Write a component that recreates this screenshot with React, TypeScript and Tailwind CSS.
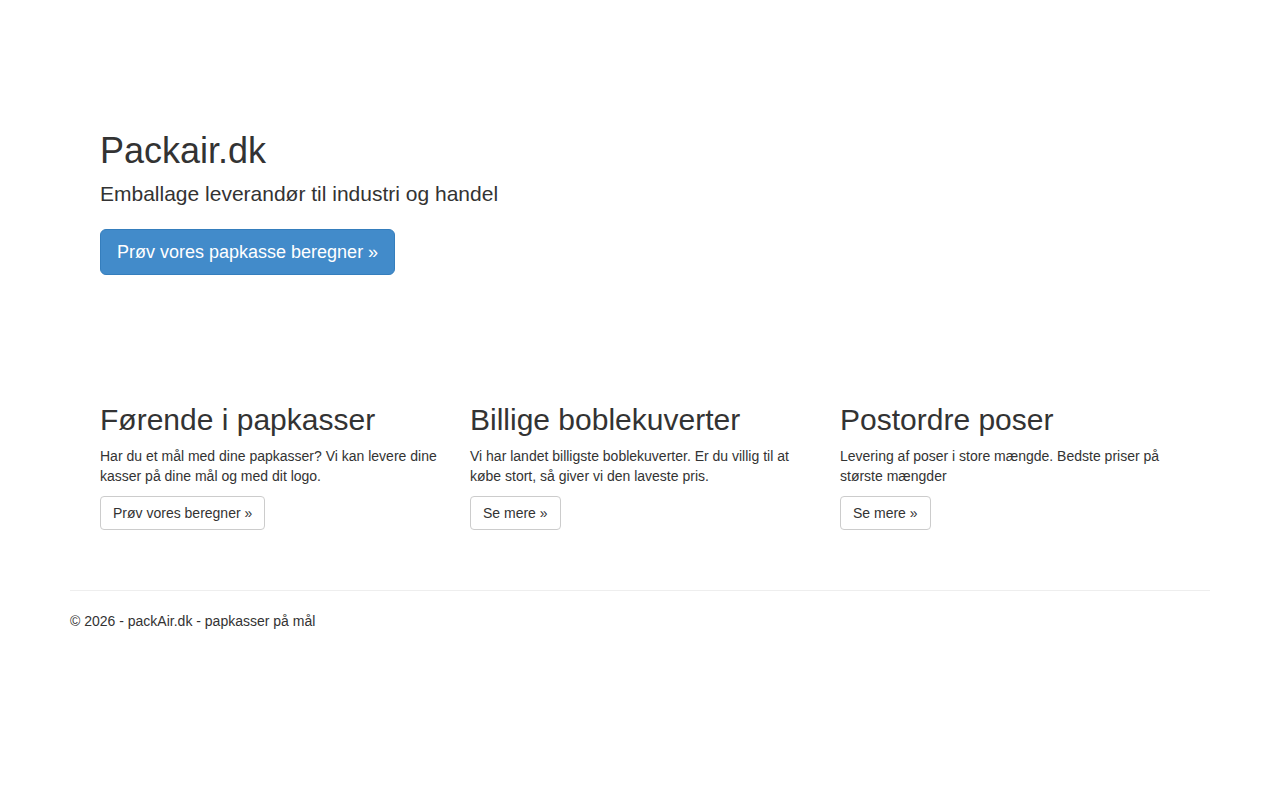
import React from "react";

const features = [
  {
    title: "Førende i papkasser",
    text: "Har du et mål med dine papkasser? Vi kan levere dine kasser på dine mål og med dit logo.",
    button: "Prøv vores beregner »",
  },
  {
    title: "Billige boblekuverter",
    text: "Vi har landet billigste boblekuverter. Er du villig til at købe stort, så giver vi den laveste pris.",
    button: "Se mere »",
  },
  {
    title: "Postordre poser",
    text: "Levering af poser i store mængde. Bedste priser på største mængder",
    button: "Se mere »",
  },
];

const App: React.FC = () => {
  return (
    <div className="min-h-[800px] bg-white text-[#333] font-['Liberation_Sans',Arial,sans-serif] text-[14px] leading-[20px]">
      <div className="w-[1140px] mx-auto pt-[111px]">
        <div className="pl-[30px]">
          <h1 className="mt-[20px] mb-[8px] text-[36px] leading-[1.1]">Packair.dk</h1>
          <p className="mb-[15px] text-[21px] leading-[30px]">Emballage leverandør til industri og handel</p>
          <a
            href="#"
            className="inline-block mt-[5px] px-[16px] py-[10px] text-[18px] leading-[24px] text-white bg-[#428bca] border border-[#357ebd] rounded-[6px]"
          >
            Prøv vores papkasse beregner »
          </a>
        </div>

        <div className="grid grid-cols-3 px-[15px] mt-[128px]">
          {features.map((f) => (
            <div key={f.title} className="px-[15px]">
              <h2 className="mb-[10px] text-[30px] leading-[1.1]">{f.title}</h2>
              <p className="mb-[10px]">{f.text}</p>
              <a
                href="#"
                className="inline-block px-[12px] py-[6px] text-[14px] leading-[20px] text-[#333] bg-white border border-[#ccc] rounded-[4px]"
              >
                {f.button}
              </a>
            </div>
          ))}
        </div>

        <hr className="mt-[60px] mb-[20px] border-0 border-t border-[#eee]" />
        <footer>
          <p>© 2026 - packAir.dk - papkasser på mål</p>
        </footer>
      </div>
    </div>
  );
};

export default App;
